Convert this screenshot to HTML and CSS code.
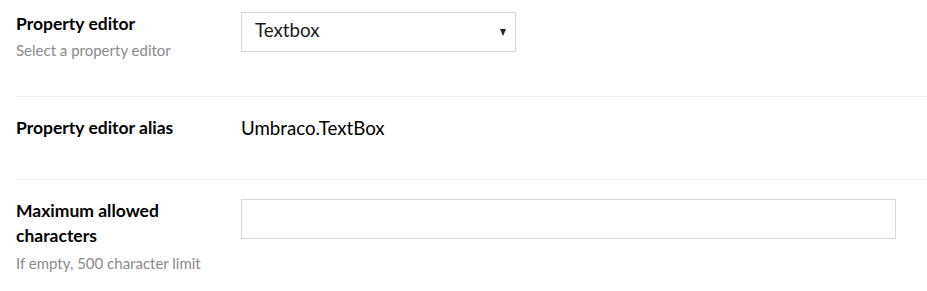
FILE: index.html
```html
<!DOCTYPE html>
<html lang="en">
<head>
<meta charset="utf-8">
<title>Property editor settings</title>
<link rel="stylesheet" href="styles.css">
</head>
<body>
<div class="panel">
  <div class="prop prop-first">
    <div class="prop-label">
      <label class="label-text">Property editor</label>
      <div class="desc">Select a property editor</div>
    </div>
    <div class="prop-control">
      <div class="select-wrap">
        <select class="select">
          <option>Textbox</option>
        </select>
      </div>
    </div>
  </div>
  <div class="prop">
    <div class="prop-label">
      <label class="label-text">Property editor alias</label>
    </div>
    <div class="prop-control">
      <div class="value">Umbraco.TextBox</div>
    </div>
  </div>
  <div class="prop prop-last">
    <div class="prop-label">
      <label class="label-text">Maximum allowed characters</label>
      <div class="desc desc-wrap">If empty, 500 character limit</div>
    </div>
    <div class="prop-control">
      <input class="text-input" type="text">
    </div>
  </div>
</div>
</body>
</html>
```

FILE: styles.css
```css
* { box-sizing: border-box; }
html, body {
  margin: 0;
  padding: 0;
  background: #fff;
}
body {
  font-family: Lato, "Open Sans", sans-serif;
  color: #000;
}
.panel {
  padding-left: 16px;
}
.prop {
  display: flex;
  align-items: flex-start;
  padding: 19px 0 38px;
  border-bottom: 1px solid #f2f2f2;
}
.prop-first {
  padding-top: 12px;
  padding-bottom: 36px;
}
.prop-last {
  border-bottom: none;
  padding-bottom: 10px;
}
.prop-label {
  width: 225px;
  flex: none;
  padding-right: 20px;
  margin-top: -1px;
}
.label-text {
  display: block;
  font-weight: 700;
  font-size: 17.5px;
  line-height: 25px;
  color: #000;
}
.desc {
  font-size: 15px;
  line-height: 20px;
  color: #8a8a8d;
  margin-top: 4px;
}
.desc-wrap {
  margin-top: 5px;
}
.prop-control {
  flex: 1;
  padding-right: 31px;
}
.select-wrap {
  position: relative;
  width: 275px;
}
.select {
  -webkit-appearance: none;
  appearance: none;
  display: block;
  width: 100%;
  height: 40px;
  margin: 0;
  border: 1px solid #d8d7d9;
  border-radius: 0;
  background: #fff;
  font-family: Lato, sans-serif;
  font-size: 18.7px;
  color: #1b1b1b;
  padding: 0 13px 4px;
}
.select-wrap::after {
  content: "";
  position: absolute;
  right: 10px;
  top: 17px;
  border-left: 3.5px solid transparent;
  border-right: 3.5px solid transparent;
  border-top: 7px solid #222;
}
.value {
  font-size: 18.7px;
  line-height: 25px;
  color: #000;
}
.text-input {
  display: block;
  width: 100%;
  height: 40px;
  margin: 0;
  border: 1px solid #d8d7d9;
  border-radius: 0;
  background: #fff;
  font-family: Lato, sans-serif;
  font-size: 18.7px;
  padding: 0 12px;
}
```
